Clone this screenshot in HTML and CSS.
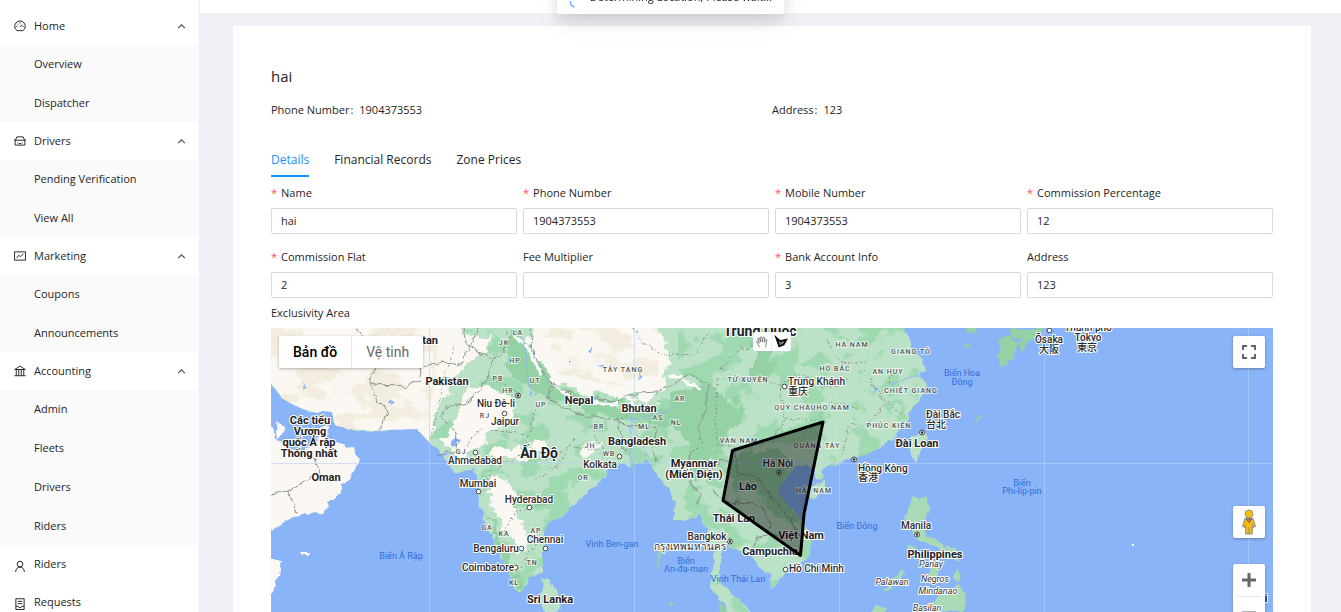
FILE: index.html
```html
<!DOCTYPE html>
<html lang="en">
<head>
<meta charset="utf-8">
<title>Fleet details</title>
<link rel="stylesheet" href="styles.css">
</head>
<body>
<div class="app">
  <nav class="sidebar">
    <div class="group">
      <button class="item head" type="button">
        <svg class="icon" viewBox="0 0 16 16"><path d="M4.2 14.2a7 7 0 1 1 7.6 0z"/><path d="M8 9.500l3-3.300M8 3.200v1.500M3 8.500h1.500M11.500 8.500H13M4.500 5l1 1"/></svg>
        <span class="name">Home</span>
        <svg class="caret" viewBox="0 0 10 6"><path d="M1 5l4-4 4 4"/></svg>
      </button>
      <div class="sub">
        <a class="item" href="#">Overview</a>
        <a class="item" href="#">Dispatcher</a>
      </div>
    </div>
    <div class="group">
      <button class="item head" type="button">
        <svg class="icon" viewBox="0 0 16 16"><path d="M2 7l1.800-4.500h8.400L14 7M1.500 7h13v6.500h-13zM4.500 10.500h1M10.500 10.500h1M6 11.500h4M0 6.500h2M14 6.500h2"/></svg>
        <span class="name">Drivers</span>
        <svg class="caret" viewBox="0 0 10 6"><path d="M1 5l4-4 4 4"/></svg>
      </button>
      <div class="sub">
        <a class="item" href="#">Pending Verification</a>
        <a class="item" href="#">View All</a>
      </div>
    </div>
    <div class="group">
      <button class="item head" type="button">
        <svg class="icon" viewBox="0 0 16 16"><path d="M.7 2.500h14.600v11H.7z"/><path d="M3.500 10.500l3-3.500 2 2 4-4"/></svg>
        <span class="name">Marketing</span>
        <svg class="caret" viewBox="0 0 10 6"><path d="M1 5l4-4 4 4"/></svg>
      </button>
      <div class="sub">
        <a class="item" href="#">Coupons</a>
        <a class="item" href="#">Announcements</a>
      </div>
    </div>
    <div class="group">
      <button class="item head" type="button">
        <svg class="icon" viewBox="0 0 16 16"><path d="M1 6l7-4.500L15 6zM.5 14.300h15M3 6v8M6.300 6v8M9.700 6v8M13 6v8"/></svg>
        <span class="name">Accounting</span>
        <svg class="caret" viewBox="0 0 10 6"><path d="M1 5l4-4 4 4"/></svg>
      </button>
      <div class="sub">
        <a class="item" href="#">Admin</a>
        <a class="item" href="#">Fleets</a>
        <a class="item" href="#">Drivers</a>
        <a class="item" href="#">Riders</a>
      </div>
    </div>
    <a class="item head single" href="#">
      <svg class="icon" viewBox="0 0 16 16"><circle cx="8" cy="5.500" r="3.800"/><path d="M2.200 16c0-4 2.500-6.500 5.800-6.500s5.800 2.500 5.800 6.500"/></svg>
      <span class="name">Riders</span>
    </a>
    <a class="item head single" href="#">
      <svg class="icon" viewBox="0 0 16 16"><path d="M2.500 1h11v14.300h-11zM5 4.500h6M5 7.500h6M2.500 11h3.200l1 1.700h2.600l1-1.700h3.200"/></svg>
      <span class="name">Requests</span>
    </a>
  </nav>

  <div class="main">
    <header class="topbar"></header>
    <main class="card">
      <h1 class="title">hai</h1>
      <div class="facts">
        <div>Phone Number<span class="colon">:</span>1904373553</div>
        <div>Address<span class="colon">:</span>123</div>
      </div>
      <div class="tabs" role="tablist">
        <button class="tab active" type="button" role="tab" aria-selected="true">Details</button>
        <button class="tab" type="button" role="tab">Financial Records</button>
        <button class="tab" type="button" role="tab">Zone Prices</button>
      </div>
      <form class="form">
        <div class="field"><label class="required" for="name">Name</label><input id="name" value="hai"></div>
        <div class="field"><label class="required" for="phone">Phone Number</label><input id="phone" value="1904373553"></div>
        <div class="field"><label class="required" for="mobile">Mobile Number</label><input id="mobile" value="1904373553"></div>
        <div class="field"><label class="required" for="percent">Commission Percentage</label><input id="percent" value="12"></div>
        <div class="field"><label class="required" for="flat">Commission Flat</label><input id="flat" value="2"></div>
        <div class="field"><label for="fee">Fee Multiplier</label><input id="fee" value=""></div>
        <div class="field"><label class="required" for="bank">Bank Account Info</label><input id="bank" value="3"></div>
        <div class="field"><label for="address">Address</label><input id="address" value="123"></div>
      </form>
      <div class="area-label">Exclusivity Area</div>
      <div class="map">
        <svg class="canvas" viewBox="271 328 1002 320" preserveAspectRatio="xMidYMin slice">
          <defs>
            <filter id="coast" x="-5%" y="-5%" width="110%" height="110%">
              <feTurbulence type="fractalNoise" baseFrequency=".12" numOctaves="3" seed="4"/>
              <feDisplacementMap in="SourceGraphic" scale="7" xChannelSelector="R" yChannelSelector="G"/>
            </filter>
            <filter id="soft" x="-10%" y="-10%" width="120%" height="120%">
              <feTurbulence type="fractalNoise" baseFrequency=".06" numOctaves="4" seed="9"/>
              <feDisplacementMap in="SourceGraphic" scale="24" xChannelSelector="R" yChannelSelector="G"/>
            </filter>
            <filter id="relief" x="0" y="0" width="100%" height="100%" color-interpolation-filters="sRGB">
              <feTurbulence type="fractalNoise" baseFrequency=".035 .045" numOctaves="4" seed="12" result="n"/>
              <feColorMatrix in="n" values="0 0 0 0 .62  0 0 0 0 .85  0 0 0 0 .69  14 0 0 0 -7.400"/>
              <feComposite in2="SourceGraphic" operator="in"/>
            </filter>
            <filter id="sand" x="0" y="0" width="100%" height="100%" color-interpolation-filters="sRGB">
              <feTurbulence type="fractalNoise" baseFrequency=".03 .05" numOctaves="4" seed="31" result="n"/>
              <feColorMatrix in="n" values="0 0 0 0 .95  0 0 0 0 .93  0 0 0 0 .87  12 0 0 0 -5.800"/>
              <feComposite in2="SourceGraphic" operator="in"/>
            </filter>
            <path id="asia" d="M260 318H899L908 336 913 349 923 359 925 371 917 373 925 381 927 386 920 399 912 409 905 426 897 434 887 444 870 453 853 458 837 464 820 469 825 478 817 479 813 469 807 464 795 466 782 481 778 493 790 508 802 521 811 539 809 556 800 564 787 573 777 583 771 589 770 574 760 569 753 559 747 553 733 549 727 544 722 546 722 559 718 573 722 583 730 593 743 603 752 614 758 630H738L727 608 720 599 710 589 712 573 715 559 712 546 705 526 698 509 697 516 685 521 673 521 675 503 670 489 663 483 658 476 652 466 647 456 645 461 630 466 623 464 608 469 605 478 590 489 573 506 563 516 548 523 544 533 543 556 543 571 537 574 528 578 523 591 518 593 512 578 500 556 490 533 483 516 478 496 477 478 475 468 470 471 457 473 445 461 443 457 455 454 443 454 437 447 428 441 417 429 387 430 373 431 350 429 335 425 332 412 323 411 317 413 303 409 292 404 282 398 271 383 260 375Z"/>
            <path id="arabia" d="M260 420L271 428 280 441 290 449 303 452 316 442 322 426 327 427 326 438 340 444 352 448 360 459 349 479 341 484 341 493 330 503 323 513 307 514 291 518 271 531 260 538Z"/>
            <clipPath id="land"><use href="#asia"/></clipPath>
          </defs>

          <g filter="url(#coast)">
            <use href="#asia" fill="#bbe2c6"/>
            <use href="#arabia" fill="#fbf8f3"/>
            <path fill="#fbf8f3" d="M277 422l7 4-1 9-4 3-3-7zM260 560l22 0-3 16-8 17-11 8zM301 552h9v3h-8z"/>
            <path fill="#bbe2c6" d="M543 579l5 1 10 12 3 10-4 11h-13l-3-13zM806 486l19-5v11l-12 7-7-5zM924 431l3 7-5 15-7 9-6-12 3-12z"/>
            <path fill="#a8dab5" d="M913 497l15 1 1 14-7 13 4 10 12 6 8 7-2 4-12-6-8-4-10-5-4-12-6-5 3-8zM906 545l8 3 2 5-7-1zM901 569l4 4-19 18-3-1 14-14zM931 560l9 5-6 18-8-7 4-3zM945 546l11 2 3 14-7-2-5-7zM956 568l5 5-2 11-6-5zM942 593l17-8 8 17-5 10-12-2-13 2-6-8zM876 605l12 3-5 8-14 0z"/>
            <path fill="#94d2a5" d="M997 340l11-5 9 8-2 13-12 13-6-11 4-10zM1010 330l35-2-7 9-10 4-17-5zM1018 341l10-2-1 8-7 4zM964 330l13-2-4 7zM964 343l8 0-5 5zM978 418l7-4-8 8zM1064 328h26l-12 8zM660 546l3 5-3 13-3 8 1-20zM669 603h3v3zM718 603l16 12h-13z"/>
          </g>
          <g clip-path="url(#land)">
            <path filter="url(#relief)" d="M448 332l40-4 26 24 40 34 90 10 34-12 0-60h240v300H430V435l50-40z"/>
            <g filter="url(#soft)" fill="#fbf8f3">
              <path d="M240 300H452L460 334 482 340 494 336 490 352 464 364 450 378 446 398 434 414 434 432 430 450 400 450H240z"/>
              <path d="M458 400l20-12 24 0 14 20-8 16-22 14-10 14-20 2-12-12 6-16z"/>
              <path d="M538 300H650L665 340 668 372 664 392 655 400 620 400 580 388 552 378 530 352z"/>
              <path d="M488 474l20 10 8 18-2 12 12 6 4 30-10 4-10-16-12-20-10-20z"/>
              <path d="M494 446l30 2 20-6 4 8-30 10-22 0zM576 446l14-10 12 6-16 12z"/>
            </g>
            <path filter="url(#sand)" d="M260 328h180l-12 105H260zM536 328h122v66l-100-20z"/>
            <g filter="url(#soft)" fill="#94d2a5">
              <path d="M506 328h14l20 38 20 20 74 22 30-2 30-20 34 2 14 30-20 20-14 34-14 10 2-24-20-30-32-6-60-10-50-20-32-26z"/>
              <path d="M487 514l8 14 16 34 10 30-6 0-16-34z"/>
              <path d="M724 464l44-16 30 22-14 18 20 36-16 2-24-30-28-10z"/>
              <path d="M752 340l16-10 14 6-10 30-20 20z"/>
            </g>
            <g filter="url(#coast)" fill="none" stroke="#fff" stroke-width="3"><path d="M514 336l13 10 14 30M548 378l26 22 46 5M668 377l12-2 10 10 10 4"/></g>
          </g>
          <g filter="url(#coast)" fill="#8ab4f8">
            <path d="M389 398l5 5-1 3-6-3zM451 441l8-2-3 8-5-1zM301 384l6 5-2 1zM568 360l3 0 0 4zM638 373l4 3-3 4zM596 366l8-2 0 3zM587 350l5-3-1 7zM873 386l4 3-2 4z"/>
            <path fill="none" stroke="#8ab4f8" d="M631 466l-1-46 12-2 26-7 14-10M648 456l-8-16-9-16M521 332l6 28 4 36M880 392l16-10 26-8"/>
          </g>
          <g filter="url(#coast)" fill="none" stroke="#8b918d" stroke-width="1">
            <path d="M357 328l14 22 5 18-8 15 15 2 22 2 14-7 3-13 20-6 16 5 12-20 8-14-3-8M369 383l9 18 10 10-9 19M463 328l3 14 25 18 6-4-7 12-9 22-15 12-16 4-9 10 16 18-1 17-20 4"/>
            <path d="M499 356l10-14-3-14M530 328l4 30 14 22 26 16 44 6 10-8 28-2 20-8 14-10 18 10-2 26-8 18 4 14-12 12 0 28 10 12-2 12M552 384l-6 14 30 16 44 8 8-8M618 418l4 30 6 4M620 424l36 4-4 20 5 14M271 494l17-3 32-19-8-20M288 492l10 22M708 478l10-16 16-2M735 450l4 24 16 2 18 24 14 14 12 20-10 8M712 490l18 12 30 4 12 20-14 14M752 552l6-16 32-2"/>
            <path stroke-dasharray="2 2" d="M633 328l8 14 18 12 34 2 18-24M717 380l-2 42 4 24 24 0M720 370l20-22 30 2 10-16M745 380l34 4 22-10 30 14 18-10M780 384l4 34 34 2 12-18 30 6M826 340l14 24 28-2M866 370l18 34-16 20-20 2-6 32M892 374l-10 24 20 16M786 420l-16 20 20 24M556 384l-22 30-8 30 20 14 26-12 38 6M480 428l-14 20M490 430l36 4M530 450l-40 22-6 20M500 540l14-26 34-12M520 566l14-18 8-20M520 394l-28-16M455 346l-10 30-8 36-6 24M574 440l-16 26-24 14M590 424l10 22 20 12"/>
          </g>
          <path stroke="#b9d0f5" stroke-opacity=".6" d="M271 463.500h1002M429.500 328v320M634.500 328v320M839.500 328v320M1044.500 328v320M1248.500 328v320"/>
          <path fill="#fff" d="M1132 544h2v2h-2z"/>

          <g class="sea">
            <text x="401" y="559">Biển Ả Rập</text>
            <text x="612" y="547">Vịnh Ben-gan</text>
            <text x="686" y="564">Biển</text><text x="686" y="572">An-đa-man</text>
            <text x="738" y="582">Vịnh Thái Lan</text>
            <text x="857" y="529">Biển Đông</text>
            <text x="962" y="376">Biển Hoa</text><text x="962" y="385">Đông</text>
            <text x="1022" y="486">Biển</text><text x="1022" y="494">Phi-líp-pin</text>
          </g>
          <g class="region">
            <text x="518" y="335">LA</text><text x="504" y="345">JK</text><text x="515" y="363">HP</text><text x="498" y="381">PB</text><text x="535" y="383">UT</text><text x="508" y="393">HR</text><text x="485" y="418">RJ</text><text x="541" y="407">UP</text><text x="461" y="454">GJ</text><text x="487" y="530">GA</text><text x="504" y="536">KA</text><text x="536" y="533">AP</text><text x="532" y="565">TN</text><text x="514" y="585">KL</text>
            <text x="623" y="372">TÂY TẠNG</text><text x="748" y="382">TỨ XUYÊN</text><text x="680" y="401">AR</text><text x="658" y="420">AS</text><text x="644" y="429">ML</text><text x="676" y="425">NL</text><text x="599" y="429">BR</text><text x="590" y="448">JH</text><text x="609" y="456">WB</text><text x="583" y="480">OR</text>
            <text x="739" y="443">VÂN NAM</text><text x="852" y="347">HÀ NAM</text><text x="911" y="354">GIANG TÔ</text><text x="835" y="371">HỒ BẮC</text><text x="888" y="374">AN HUY</text><text x="911" y="393">CHIẾT GIANG</text><text x="812" y="410">QUÝ CHÂUHỒ NAM</text><text x="889" y="428">PHÚC KIẾN</text><text x="817" y="448">QUẢNG TÂY</text><text x="814" y="493">HẢI NAM</text>
          </g>
          <g class="island">
            <text x="931" y="567">Panay</text><text x="892" y="585">Palawan</text><text x="935" y="582">Negros</text><text x="938" y="594">Mindanao</text><text x="927" y="611">Basilan</text>
          </g>
          <g class="dots">
            <circle cx="504.500" cy="413.500" r="2.300"/><circle cx="475.500" cy="452.500" r="2.300"/><circle cx="478.500" cy="491.500" r="2.300"/><circle cx="529.500" cy="507.500" r="2.300"/><circle cx="521.500" cy="548.500" r="2.300"/><circle cx="515.500" cy="567.500" r="2.300"/><circle cx="545.500" cy="548.500" r="2.300"/><circle cx="619.500" cy="456.500" r="2.300"/><circle cx="784.500" cy="386.500" r="2.300"/><circle cx="785.500" cy="569.500" r="2.300"/><circle cx="1049.500" cy="330.500" r="2.300"/>
            <circle cx="518" cy="395.500" r="2.500"/><circle cx="730" cy="541.500" r="2.500"/><circle cx="779" cy="472.500" r="2.500"/><circle cx="854" cy="459.500" r="2.500"/><circle cx="922" cy="432.500" r="2.500"/><circle cx="917" cy="534.500" r="2.500"/>
            <g class="capital"><circle cx="518" cy="395.500" r="1.200"/><circle cx="730" cy="541.500" r="1.200"/><circle cx="779" cy="472.500" r="1.200"/><circle cx="854" cy="459.500" r="1.200"/><circle cx="922" cy="432.500" r="1.200"/><circle cx="917" cy="534.500" r="1.200"/></g>
          </g>
          <g class="city">
            <text x="496" y="407">Niu Đê-li</text><text x="505" y="425">Jaipur</text><text x="475" y="464">Ahmedabad</text><text x="478" y="487">Mumbai</text><text x="529" y="503">Hyderabad</text><text x="496" y="552">Bengaluru</text><text x="488" y="571">Coimbatore</text><text x="545" y="543">Chennai</text><text x="600" y="468">Kolkata</text>
            <text x="707" y="540">Bangkok</text><text x="690" y="550">กรุงเทพมหานคร</text><text x="778" y="467">Hà Nội</text><text x="916" y="529">Manila</text>
            <text x="1049" y="343">Ōsaka</text><text x="1049" y="353">大阪</text><text x="1088" y="331">Thành phố</text><text x="1088" y="341">Tokyo</text><text x="1087" y="351">東京</text>
            <g class="start"><text x="788" y="385">Trùng Khánh</text><text x="788" y="395">重庆</text><text x="926" y="418">Đài Bắc</text><text x="926" y="428">台北</text><text x="858" y="472">Hồng Kông</text><text x="858" y="481">香港</text><text x="789" y="572">Hồ Chí Minh</text></g>
          </g>
          <g class="country">
            <text x="408" y="344">Afghanistan</text><text x="447" y="385">Pakistan</text><text x="326" y="481">Oman</text><text x="310" y="424">Các tiểu</text><text x="310" y="435">Vương</text><text x="309" y="446">quốc Ả rập</text><text x="309" y="457">Thống nhất</text>
            <text x="579" y="404">Nepal</text><text x="639" y="412">Bhutan</text><text x="637" y="445">Bangladesh</text><text x="694" y="467">Myanmar</text><text x="694" y="478">(Miến Điện)</text><text x="748" y="490">Lào</text><text x="734" y="522">Thái Lan</text><text x="801" y="539">Việt Nam</text><text x="770" y="555">Campuchia</text><text x="550" y="603">Sri Lanka</text><text x="917" y="447">Đài Loan</text><text x="935" y="558">Philippines</text>
            <g class="large"><text x="539" y="458">Ấn Độ</text><text x="760" y="336">Trung Quốc</text></g>
            <text x="1266" y="602">i</text>
          </g>
          <path class="zone" d="M823 422L732.500 450.500 723 500.500 800.500 555.500 804 514z"/>
        </svg>
        <div class="map-types">
          <button class="selected" type="button">Bản đồ</button>
          <button type="button">Vệ tinh</button>
        </div>
        <div class="draw-tools">
          <button type="button" aria-label="Pan"><svg viewBox="0 0 16 16"><path d="M5.500 14L2 8.500c-.8-1.500.8-2 1.600-.8L5 9.500 3.300 4.500c-.4-1.400 1-1.800 1.500-.6L6.500 8 6 3c0-1.400 1.600-1.400 1.800 0L8.500 8l.8-4.800c.3-1.300 1.800-1 1.700.4L10.500 8.500l1.600-3c.7-1 1.900-.4 1.500.8L12 14" fill="#fff" stroke="#777"/></svg></button>
          <button type="button" aria-label="Draw zone"><svg viewBox="0 0 16 16"><path d="M2.500 3l4.500 4L14 5.500l-3 5.500-5 2z" fill="#777" stroke="#000" stroke-width="2"/></svg></button>
        </div>
        <button class="control fullscreen" type="button" aria-label="Fullscreen"><svg viewBox="0 0 18 18"><path d="M3 7V3h4M11 3h4v4M15 11v4h-4M7 15H3v-4"/></svg></button>
        <button class="control pegman" type="button" aria-label="Street view"><svg viewBox="0 0 16 28"><path d="M4 10.500h8l2.500 8-2 1-1.200-3v9.500H4.700v-9.500l-1.200 3-2-1z" fill="#fbbc04" stroke="#8a8f98"/><circle cx="8" cy="6" r="4" fill="#fbbc04" stroke="#8a8f98"/><path d="M8 19v7" stroke="#8a8f98"/><path d="M5 11h6l-3 3.500z" fill="#e8743b"/></svg></button>
        <div class="control zoom">
          <button type="button" aria-label="Zoom in"><svg viewBox="0 0 18 18"><path d="M2 9h14M9 2v14"/></svg></button>
          <button type="button" aria-label="Zoom out"><svg viewBox="0 0 18 18"><path d="M2 9h14"/></svg></button>
        </div>
      </div>
    </main>
  </div>
</div>
<div class="notice" role="status">
  <svg viewBox="0 0 14 14"><path d="M5 13A6 6 0 0 1 1 7"/></svg>
  <span>Determining Location, Please wait...</span>
</div>
</body>
</html>
```

FILE: styles.css
```css
* { box-sizing: border-box; }
body {
  margin: 0;
  font: 11px/18px "Open Sans", "Noto Sans", sans-serif;
  color: #262626;
}
button, input { font: inherit; color: inherit; }
button { border: 0; background: none; padding: 0; }
a { color: inherit; text-decoration: none; }

.app { display: flex; height: 100vh; overflow: hidden; background: #f0f1f6; }

.sidebar {
  flex: 0 0 200px;
  padding-top: 7px;
  overflow: hidden;
  background: #fff;
  border-right: 1px solid #f0f0f0;
}
.item { display: flex; align-items: center; width: 100%; height: 38px; padding: 0 13px 0 34px; text-align: left; }
.head { padding-left: 14px; }
.name { flex: 1; }
.icon { width: 12px; height: 12px; margin-right: 8px; fill: none; stroke: #262626; stroke-width: 1.3; overflow: visible; }
.single .icon { margin-top: 4px; }
.caret { width: 9px; height: 5px; fill: none; stroke: #555; stroke-width: 1.5; }
.sub { display: grid; gap: 1px; background: #fafafa; }

.main { flex: 1; min-width: 0; }
.topbar { height: 13px; background: #fff; }
.card { margin: 13px 30px 0 33px; padding: 38px; background: #fff; }
.title { margin: 0; font-size: 15px; line-height: 24px; font-weight: 500; }
.facts { display: grid; grid-template-columns: 1fr 1fr; margin-top: 13px; }
.colon { margin: 0 6px 0 1px; }
.tabs { display: flex; gap: 25px; margin-top: 28px; font-size: 12px; line-height: 18px; }
.tab { padding: 4px 0 6px; border-bottom: 2px solid transparent; }
.tab.active { color: #1890ff; border-color: #1890ff; }

.form { display: grid; grid-template-columns: repeat(4, minmax(0, 1fr)); gap: 14px 6px; margin-top: 7px; }
.field { display: grid; gap: 6px; }
.required::before { content: "*"; margin-right: 4px; color: #ff4d4f; }
.field input { width: 100%; height: 26px; padding: 0 9px 2px; background: #fff; border: 1px solid #d9d9d9; border-radius: 2px; }
.area-label { margin-top: 6px; }

.map { position: relative; height: 320px; margin-top: 6px; overflow: hidden; background: #8ab4f8; font-family: Roboto, sans-serif; }
.canvas { display: block; width: 100%; height: 100%; }
.canvas text { text-anchor: middle; paint-order: stroke; stroke-linejoin: round; font-family: Roboto, "Noto Sans CJK JP", sans-serif; }
.canvas .sea text { font-size: 9px; fill: #2f6fd8; }
.canvas .region text { font-size: 7px; font-weight: 500; letter-spacing: 1px; fill: #4d5656; stroke: #fff; stroke-width: 2px; stroke-opacity: .7; }
.canvas .island text { font-size: 9px; font-style: italic; fill: #333; stroke: #fff; stroke-width: 2px; }
.canvas .city text { font-size: 10px; font-weight: 500; fill: #2a2b2e; stroke: #fff; stroke-width: 2px; }
.canvas .start text { text-anchor: start; }
.canvas .country text { font-size: 11px; font-weight: 700; fill: #202124; stroke: #fff; stroke-width: 2px; }
.canvas .country .large text { font-size: 14px; }
.dots { fill: #fff; stroke: #444; stroke-width: 1px; }
.capital { fill: #222; stroke: none; }
.zone { fill: #000; fill-opacity: .4; stroke: #000; stroke-width: 3px; stroke-linejoin: round; }

.map-types { position: absolute; top: 8px; left: 8px; display: flex; background: #fff; border-radius: 2px; box-shadow: 0 1px 3px rgba(0, 0, 0, .3); font-size: 14px; }
.map-types button { height: 32px; padding: 0 14px; color: #666; }
.map-types .selected { color: #000; font-weight: 500; border-right: 1px solid #e8e8e8; }
.draw-tools { position: absolute; top: 4px; left: 50%; display: flex; margin-left: -19px; background: #fff; border-radius: 2px; }
.draw-tools button { display: grid; place-items: center; width: 19px; height: 19px; border-right: 1px solid #eee; }
.draw-tools svg { width: 14px; height: 14px; }
.control { position: absolute; right: 8px; display: grid; place-items: center; width: 32px; height: 32px; background: #fff; border-radius: 2px; box-shadow: 0 1px 3px rgba(0, 0, 0, .3); }
.control svg { display: block; width: 18px; height: 18px; fill: none; stroke: #666; stroke-width: 2; }
.fullscreen { top: 8px; }
.pegman { top: 178px; }
.pegman svg { width: 16px; height: 28px; stroke-width: 1; }
.zoom { top: 236px; height: 65px; }
.zoom svg { stroke-width: 3; }
.zoom button { display: grid; place-items: center; width: 24px; height: 32px; }
.zoom button + button { height: 33px; border-top: 1px solid #e6e6e6; }

.notice {
  position: fixed;
  top: -18px;
  left: 50%;
  display: flex;
  align-items: center;
  gap: 7px;
  height: 32px;
  padding: 0 12px 2px;
  background: #fff;
  border-radius: 2px;
  box-shadow: 0 6px 16px rgba(0, 0, 0, .12), 0 9px 28px rgba(0, 0, 0, .06);
  white-space: nowrap;
  transform: translateX(-50%);
}
.notice svg { width: 14px; height: 14px; margin-top: 8px; fill: none; stroke: #69b1ff; stroke-width: 1.5; }
```
